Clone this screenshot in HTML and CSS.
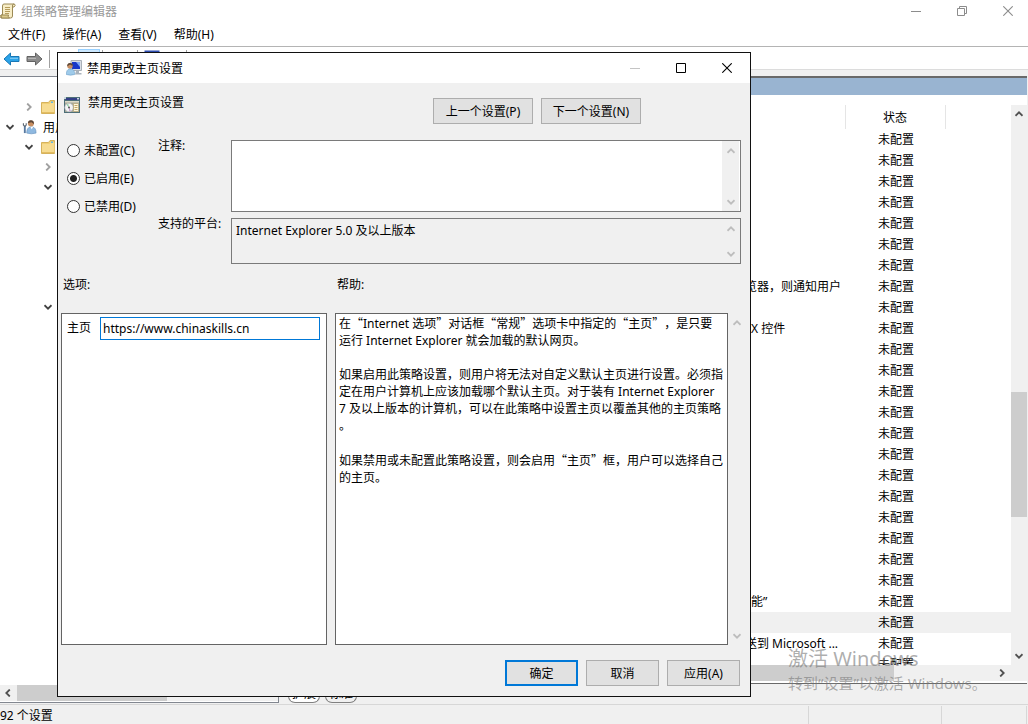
FILE: index.html
```html
<!DOCTYPE html>
<html lang="zh-CN">
<head>
<meta charset="utf-8">
<title>组策略管理编辑器</title>
<link rel="stylesheet" href="styles.css">
</head>
<body>
<svg class="defs" aria-hidden="true">
  <symbol id="up" viewBox="0 0 8 6"><path d="M0.5 4.8 4 1.3 7.5 4.8" fill="none" stroke="currentColor" stroke-width="1.8"/></symbol>
  <symbol id="down" viewBox="0 0 8 6"><path d="M0.5 1.2 4 4.7 7.5 1.2" fill="none" stroke="currentColor" stroke-width="1.8"/></symbol>
  <symbol id="left" viewBox="0 0 6 8"><path d="M4.8 0.5 1.3 4 4.8 7.5" fill="none" stroke="currentColor" stroke-width="1.8"/></symbol>
  <symbol id="right" viewBox="0 0 6 8"><path d="M1.2 0.5 4.7 4 1.2 7.5" fill="none" stroke="currentColor" stroke-width="1.8"/></symbol>
  <symbol id="cross" viewBox="0 0 10 10"><path d="M0.3 0.3 9.7 9.7M9.7 0.3 0.3 9.7" stroke="currentColor" stroke-width="1.1"/></symbol>
  <symbol id="dash" viewBox="0 0 10 10"><path d="M0 5.5H10" stroke="currentColor"/></symbol>
  <symbol id="arrow-l" viewBox="0 0 17 14"><path d="M1 7 7.500 1v3.500H16v5H7.500V13z" stroke-width="1"/><path d="M7 6.300H15" stroke="#fff" stroke-opacity=".45" stroke-width="1"/></symbol>
  <symbol id="folder" viewBox="0 0 14 14"><path d="M.5 2.500h7l1.500-2h4.500v13H.5z" fill="#f0cf74" stroke="#d6b25c"/><path d="M1 4h7.500l1.500-1.500h3.500V13H1z" fill="#f7dc92"/><path d="M10 1.500h2v1.500h-2z" fill="#63b7e6"/><path d="M1 12.500h12.500" stroke="#e3bd62"/></symbol>
</svg>

<header class="titlebar">
  <svg class="icon" viewBox="0 0 16 16"><path d="M4 1h10.500q1.500 1.500-.5 3h-1.500v9q0 2-2 2H1q-1.500-1.500 0-3h1.500V3Q2.500 1 4 1z" fill="#f7edc6" stroke="#9c8a55"/><path d="M1 12h7.500q-1 2 1 3H1.500z" fill="#dccb8c" stroke="#9c8a55"/><path d="M12.500 4V2q.5-1 1.500-1" fill="none" stroke="#9c8a55"/><path d="M5 4.500h5M5 6.500h5M5 8.500h5M5 10.500h4" stroke="#b59c5b"/></svg>
  <h1 class="app-title">组策略管理编辑器</h1>
  <div class="caption caption-muted">
    <button class="cap" aria-label="最小化"><svg width="10" height="10"><use href="#dash"/></svg></button>
    <button class="cap" aria-label="还原"><svg width="10" height="10" viewBox="0 0 10 10"><path d="M.5 2.500h7v7h-7zM2.500 2.500v-2h7v7h-2" fill="none" stroke="currentColor"/></svg></button>
    <button class="cap" aria-label="关闭"><svg width="10" height="10"><use href="#cross"/></svg></button>
  </div>
</header>
<nav class="menu">
  <button>文件(F)</button><button>操作(A)</button><button>查看(V)</button><button>帮助(H)</button>
</nav>
<div class="toolbar">
  <button aria-label="后退"><svg class="back" width="17" height="14"><use href="#arrow-l"/></svg></button>
  <button aria-label="前进"><svg class="forward" width="17" height="14"><use href="#arrow-l"/></svg></button>
  <i class="sep"></i>
  <button class="tool on" aria-label="显示树"></button>
  <i class="sep"></i>
  <button class="tool" aria-label="导出"><svg width="16" height="16"><path d="M3 1.500h10v13H3z" fill="#fff" stroke="#aaa"/></svg></button>
  <i class="sep"></i>
  <button class="tool wide" aria-label="属性"><svg width="16" height="18"><path d="M1.500 1.500h13v15h-13z" fill="#fff" stroke="#2d4db0" stroke-width="2"/></svg></button>
  <i class="sep"></i>
</div>

<main class="workspace">
  <section class="tree-pane" aria-label="控制台树">
    <ul class="tree">
      <li class="lv1"><svg class="chev faint" width="6" height="8"><use href="#right"/></svg><svg width="14" height="14"><use href="#folder"/></svg></li>
      <li class="lv0"><svg class="chev" width="8" height="6"><use href="#down"/></svg><svg width="15" height="16" viewBox="0 0 16 16"><circle cx="9.500" cy="4.200" r="3.200" fill="#c98f62"/><path d="M6.300 4Q6.500.5 9.500.7 13 .6 12.700 5 11 3.500 10 2.800 8 3 6.300 4z" fill="#5b4738"/><path d="M5 14.500Q5 8.500 9 8h2q4 .5 4 6.500-5 1.500-10 0z" fill="#8fb9e0" stroke="#5b8ab8" stroke-width=".6"/><path d="M9 8l1.200 2.500L12 8z" fill="#fff"/><path d="M3 6.500v8" stroke="#5779a0" stroke-width="2"/><path d="M1.500 4V6L3 7.500 4.500 6V4" fill="none" stroke="#5d6873" stroke-width="1.200"/></svg><span>用户配置</span></li>
      <li class="lv1"><svg class="chev" width="8" height="6"><use href="#down"/></svg><svg width="14" height="14"><use href="#folder"/></svg></li>
      <li class="lv2"><svg class="chev faint" width="6" height="8"><use href="#right"/></svg></li>
      <li class="lv2"><svg class="chev" width="8" height="6"><use href="#down"/></svg></li>
      <li></li><li></li><li></li><li></li><li></li>
      <li class="lv2"><svg class="chev" width="8" height="6"><use href="#down"/></svg></li>
    </ul>
    <div class="hscroll"><svg width="6" height="8"><use href="#left"/></svg><i class="thumb tree-thumb"></i></div>
  </section>
  <section class="list-side">
    <div class="list-pane">
      <div class="band"></div>
      <div class="list-body">
        <div class="list-view">
          <table class="list">
            <thead><tr><th class="name"></th><th class="state">状态</th><th></th></tr></thead>
            <tbody>
              <tr><td></td><td>未配置</td><td></td></tr>
              <tr><td></td><td>未配置</td><td></td></tr>
              <tr><td></td><td>未配置</td><td></td></tr>
              <tr><td></td><td>未配置</td><td></td></tr>
              <tr><td></td><td>未配置</td><td></td></tr>
              <tr><td></td><td>未配置</td><td></td></tr>
              <tr><td></td><td>未配置</td><td></td></tr>
              <tr><td><div class="tail mid">览器，则通知用户</div></td><td>未配置</td><td></td></tr>
              <tr><td></td><td>未配置</td><td></td></tr>
              <tr><td><div class="tail far">X 控件</div></td><td>未配置</td><td></td></tr>
              <tr><td></td><td>未配置</td><td></td></tr>
              <tr><td></td><td>未配置</td><td></td></tr>
              <tr><td></td><td>未配置</td><td></td></tr>
              <tr><td></td><td>未配置</td><td></td></tr>
              <tr><td></td><td>未配置</td><td></td></tr>
              <tr><td></td><td>未配置</td><td></td></tr>
              <tr><td></td><td>未配置</td><td></td></tr>
              <tr><td></td><td>未配置</td><td></td></tr>
              <tr><td></td><td>未配置</td><td></td></tr>
              <tr><td></td><td>未配置</td><td></td></tr>
              <tr><td></td><td>未配置</td><td></td></tr>
              <tr><td></td><td>未配置</td><td></td></tr>
              <tr><td><div class="tail">功能”</div></td><td>未配置</td><td></td></tr>
              <tr class="selected"><td></td><td>未配置</td><td></td></tr>
              <tr><td><div class="tail mid">送到 Microsoft ...</div></td><td>未配置</td><td></td></tr>
              <tr><td></td><td>未配置</td><td></td></tr>
            </tbody>
          </table>
        </div>
        <div class="vscroll"><svg width="8" height="6"><use href="#up"/></svg><i class="thumb list-vthumb"></i><svg width="8" height="6"><use href="#down"/></svg></div>
      </div>
      <div class="hscroll list-h"><i class="thumb list-hthumb"></i><svg width="6" height="8"><use href="#right"/></svg></div>
    </div>
    <div class="tabs"><button class="tab active">扩展</button><button class="tab">标准</button></div>
  </section>
</main>
<footer class="status"><span class="count">92 个设置</span><span class="cell c1"></span><span class="cell c2"></span><span class="cell c3"></span></footer>

<div class="watermark"><p class="wm-title">激活 Windows</p><p class="wm-sub">转到“设置”以激活 Windows。</p></div>

<section class="dialog" role="dialog" aria-labelledby="dlg-title">
  <header class="dlg-bar">
    <svg class="icon" viewBox="0 0 16 16"><path d="M5 .5h10.500v10H5z" fill="#d9dee5" stroke="#a9b0b8"/><path d="M6 2h8v7H6z" fill="#1738c8"/><path d="M10 2h4v5z" fill="#7ea7f5"/><path d="M10 11h3v2h2.500v1.500H9z" fill="#a9b3bd"/><circle cx="4" cy="6" r="2.700" fill="#c98f62"/><path d="M1.200 6.500Q1 2.900 4 2.900q3 0 2.800 2.800Q5 5.500 4 4.500 2.500 5.500 1.200 6.500z" fill="#5b4738"/><path d="M.3 14.500Q.3 9.500 3.500 9h2q3.200.5 3.200 5.500-4.200 1.300-8.400 0z" fill="#9fcbea" stroke="#6c9fc9" stroke-width=".6"/></svg>
    <h2 id="dlg-title">禁用更改主页设置</h2>
    <div class="caption">
      <button class="cap" disabled aria-label="最小化"><svg width="10" height="10"><use href="#dash"/></svg></button>
      <button class="cap" aria-label="最大化"><svg width="10" height="10" viewBox="0 0 10 10"><path d="M.5.5h9v9h-9z" fill="none" stroke="currentColor"/></svg></button>
      <button class="cap" aria-label="关闭"><svg width="10" height="10"><use href="#cross"/></svg></button>
    </div>
  </header>
  <form class="dlg-body">
    <div class="heading">
      <svg class="icon" viewBox="0 0 16 16"><path d="M0 0h16v16H0z" fill="#4e6f78"/><path d="M1.500 1h14v2h-14z" fill="#343f86"/><path d="M0 0h2v2H0zM13 1h2v1.500h-2z" fill="#c9d7dd"/><path d="M1 4h14v11H1z" fill="#a5a596"/><path d="M1 4h14v1.500H1z" fill="#dcdac8"/><circle cx="5" cy="10.500" r="4.200" fill="#f3f3f5" stroke="#b9bec2" stroke-width=".7"/><path d="M5 10.500 2.500 7.700 4.200 6.800z" fill="#8bd0a0"/><path d="M5 10.500l2 3.200-2 .6z" fill="#d0a0d8"/><circle cx="5" cy="10.500" r="1" fill="#555"/><path d="M9.500 6.500h5v8h-5z" fill="#fff8dc" stroke="#b5a67a" stroke-width=".8"/><path d="M10.500 8.500h3M10.500 10.500h3M10.500 12.500h3" stroke="#c4a86a"/></svg>
      <p class="policy">禁用更改主页设置</p>
      <button type="button" class="btn nav">上一个设置(P)</button>
      <button type="button" class="btn nav">下一个设置(N)</button>
    </div>
    <div class="settings">
      <div class="radios">
        <label><input type="radio" name="st">未配置(C)</label>
        <label><input type="radio" name="st" checked>已启用(E)</label>
        <label><input type="radio" name="st">已禁用(D)</label>
      </div>
      <div class="field-labels">
        <label class="l-note" for="note">注释:</label>
        <label for="plat">支持的平台:</label>
      </div>
      <div class="fields">
        <div class="box note"><textarea id="note"></textarea><div class="arrows"><svg width="8" height="6"><use href="#up"/></svg><svg width="8" height="6"><use href="#down"/></svg></div></div>
        <div class="box plat"><textarea id="plat" readonly>Internet Explorer 5.0 及以上版本</textarea><div class="arrows"><svg width="8" height="6"><use href="#up"/></svg><svg width="8" height="6"><use href="#down"/></svg></div></div>
      </div>
    </div>
    <div class="panels">
      <h3>选项:</h3>
      <h3>帮助:</h3>
      <div class="panel options"><label for="home">主页</label><input id="home" type="text" value="https://www.chinaskills.cn"></div>
      <div class="help">
        <div class="panel help-text">
          <p>在<q>Internet 选项</q>对话框<q>常规</q>选项卡中指定的<q>主页</q>，是只要<br>运行 Internet Explorer 就会加载的默认网页。</p>
          <p>如果启用此策略设置，则用户将无法对自定义默认主页进行设置。必须指<br>定在用户计算机上应该加载哪个默认主页。对于装有 Internet Explorer<br>7 及以上版本的计算机，可以在此策略中设置主页以覆盖其他的主页策略<br>。</p>
          <p>如果禁用或未配置此策略设置，则会启用<q>主页</q>框，用户可以选择自己<br>的主页。</p>
        </div>
        <div class="arrows"><svg width="8" height="6"><use href="#up"/></svg><svg width="8" height="6"><use href="#down"/></svg></div>
      </div>
    </div>
    <div class="actions">
      <button type="button" class="btn primary">确定</button>
      <button type="button" class="btn">取消</button>
      <button type="button" class="btn">应用(A)</button>
    </div>
  </form>
</section>
</body>
</html>
```
FILE: styles.css
```css
* { box-sizing: border-box; }
body {
  margin: 0;
  height: 100vh;
  display: flex;
  flex-direction: column;
  overflow: hidden;
  background: #fff;
  color: #000;
  font: 12px/17px "Noto Sans", "Noto Sans CJK SC", sans-serif;
  text-spacing-trim: space-all;
}
h1, h2, h3, p, ul { margin: 0; padding: 0; font-size: 12px; font-weight: 400; }
button, input, textarea { font: inherit; color: inherit; margin: 0; }
button { padding: 0; border: 0; background: none; white-space: nowrap; }
svg { display: block; flex: none; }
.defs { position: absolute; width: 0; height: 0; }
.icon { width: 16px; height: 16px; }

/* Main window */
.titlebar { display: flex; align-items: center; height: 22px; flex: none; }
.app-title { margin-left: 5px; color: #999; }
.caption { display: flex; margin-left: auto; }
.cap { width: 46px; height: 20px; display: grid; place-items: center; }
.caption-muted { color: #8c8c8c; margin-right: -3px; }
.cap:disabled { color: #c4c4c4; }
.menu { display: flex; gap: 17px; padding: 0 8px; height: 25px; flex: none; border-bottom: 1px solid #b4b4b4; }
.toolbar { display: flex; align-items: center; gap: 6px; height: 23px; flex: none; padding: 1px 0 0 3px; border-bottom: 1px solid #dcdcdc; }
.sep { width: 1px; height: 18px; background: #a0a0a0; }
.tool { width: 22px; height: 20px; display: grid; place-items: center; }
.tool.on { margin-left: 22px; margin-right: -4px; background: #cce8ff; border: 1px solid #99d1ff; }
.tool.wide { margin-left: -3px; margin-right: 17px; }
.back { fill: #2ba3e8; stroke: #1877b5; }
.forward { fill: #8b8b8b; stroke: #626262; transform: scaleX(-1); }

.workspace { flex: 1; min-height: 0; display: flex; gap: 2px; padding: 6px 1px 0 0; background: #f0f0f0; }
.tree-pane {
  width: 279px; flex: none; display: flex; flex-direction: column; justify-content: space-between;
  margin-bottom: 1px; background: #fff; border: solid #828790; border-width: 1px 1px 1px 0;
}
.tree { list-style: none; padding-top: 20px; }
.tree li { display: flex; align-items: center; gap: 7px; height: 20px; }
.tree .lv0 { padding-left: 6px; }
.tree .lv1 { padding-left: 25px; }
.tree .lv2 { padding-left: 44px; }
.tree span { white-space: nowrap; margin-left: -1px; }
.chev { color: #404040; margin-right: 1px; }
.chev.faint { color: #a0a0a0; margin-left: 1px; margin-right: 2px; }
.hscroll { display: flex; align-items: center; height: 16px; background: #f0f0f0; color: #505050; padding-left: 5px; }
.thumb { background: #cdcdcd; }
.tree-thumb { width: 150px; height: 16px; margin-left: 6px; }
.tree-pane .hscroll { margin-bottom: 1px; }

.list-side { flex: 1; min-width: 0; display: flex; flex-direction: column; }
.list-pane {
  flex: 1; min-height: 0; display: flex; flex-direction: column;
  background: #fff; border: solid #696969; border-width: 2px 0 1px 1px;
}
.band { height: 17px; background: #99b4d1; flex: none; margin-bottom: 10px; }
.list-body { flex: 1; min-height: 0; display: flex; }
.list-view { flex: 1; overflow: hidden; }
.list { width: 100%; border-collapse: collapse; table-layout: fixed; }
.list th { height: 24px; padding: 0; font-weight: 400; border-right: 1px solid #e5e5e5; }
.list th:last-child { width: 66px; border: 0; }
.list .state { width: 100px; }
.list td { height: 21px; padding: 0; line-height: 21px; white-space: nowrap; }
.list td:nth-child(2) { padding-left: 33px; }
.selected { background: #f0f0f0; }
.tail { width: 106px; margin-left: auto; height: 21px; }
.tail.mid { padding-left: 6px; }
.tail.far { padding-left: 12px; }
.vscroll {
  width: 16px; background: #f0f0f0; color: #505050;
  display: flex; flex-direction: column; align-items: center; justify-content: space-between; padding: 6px 0;
}
.list-vthumb { width: 16px; height: 125px; margin-top: 139px; }
.list-h { padding: 0 22px 0 16px; margin-bottom: 2px; justify-content: space-between; }
.list-hthumb { width: 596px; height: 16px; }
.tabs { display: flex; gap: 5px; height: 20px; padding-left: 7px; flex: none; }
.tab { width: 32px; height: 19px; border: 1px solid #808080; border-top: 0; border-radius: 0 0 7px 7px; }
.tab.active { background: #fff; }
.status { display: flex; height: 20px; flex: none; background: #f0f0f0; border-top: 1px solid #d7d7d7; line-height: 22px; }
.count { flex: 1; }
.cell { border-left: 1px solid #d7d7d7; margin-top: 1px; }
.c1 { width: 133px; }
.c2 { width: 85px; }
.c3 { width: 2px; }

.watermark { position: absolute; right: 32px; bottom: 30px; width: 208px; color: rgba(120, 120, 120, .6); pointer-events: none; white-space: nowrap; }
.wm-title { font-size: 20px; line-height: 26px; }
.wm-sub { font-size: 15px; line-height: 22px; }

/* Policy dialog */
.dialog { position: absolute; left: 57px; top: 52px; width: 694px; background: #f0f0f0; border: 1px solid #111; }
.dlg-bar { display: flex; align-items: center; height: 30px; padding-left: 8px; background: #fff; }
.dlg-bar h2 { margin-left: 5px; }
.dlg-bar .cap { height: 28px; }
.heading { display: flex; align-items: flex-end; padding: 11px 109px 0 6px; }
.heading .icon { margin-bottom: 11px; }
.policy { flex: 1; margin: 0 0 13px 8px; }
.heading .nav { margin-left: 8px; }
.btn { width: 73px; height: 26px; background: #e1e1e1; border: 1px solid #adadad; }
.btn.nav { width: 100px; }
.btn.primary { border: 2px solid #0078d7; }
.settings { display: flex; padding: 12px 9px 0; }
.radios { width: 91px; display: flex; flex-direction: column; gap: 8px; padding-top: 4px; }
.radios label { display: flex; align-items: center; gap: 4px; height: 20px; }
.radios input { appearance: none; width: 13px; height: 13px; border: 1px solid #333; border-radius: 50%; background: #fff; }
.radios input:checked { background: radial-gradient(circle, #222 0 3px, #fff 4px); }
.field-labels { width: 73px; padding-top: 1px; }
.field-labels label { display: block; }
.l-note { height: 78px; }
.fields { flex: 1; display: grid; row-gap: 6px; padding-top: 4px; }
.box { display: flex; border: 1px solid #7a7a7a; background: #fff; }
.box textarea { flex: 1; min-width: 0; border: 0; outline: 0; resize: none; overflow: hidden; background: none; padding: 3px 4px; }
.note { height: 72px; }
.plat { height: 46px; background: #f0f0f0; }
.arrows { width: 17px; display: flex; flex-direction: column; justify-content: space-between; align-items: center; padding: 7px 0 6px; color: #bdbdbd; }
.box .arrows { margin-right: 1px; background: #f0f0f0; }
.panels { display: grid; grid-template-columns: 266px 1fr; column-gap: 8px; padding: 12px 5px 0 3px; }
.panels h3 { height: 37px; padding-left: 2px; }
.panel { background: #fff; border: 1px solid #646464; min-height: 332px; }
.options { display: flex; align-items: flex-start; padding: 3px 6px 0 5px; }
.options label { width: 33px; padding-top: 2px; }
.options input { flex: 1; min-width: 0; height: 23px; border: 1px solid #0078d7; padding: 0 2px; outline: 0; background: #fff; }
.help { display: flex; }
.help-text { flex: 1; padding: 0 3px; white-space: nowrap; }
.help-text p + p { margin-top: 17px; }
.help-text q { quotes: none; }
.help-text q::before { content: "“"; font-family: "Noto Sans CJK SC", sans-serif; }
.help-text q::after { content: "”"; font-family: "Noto Sans CJK SC", sans-serif; }
.actions { display: flex; justify-content: flex-end; gap: 8px; padding: 15px 10px 10px; }
```
